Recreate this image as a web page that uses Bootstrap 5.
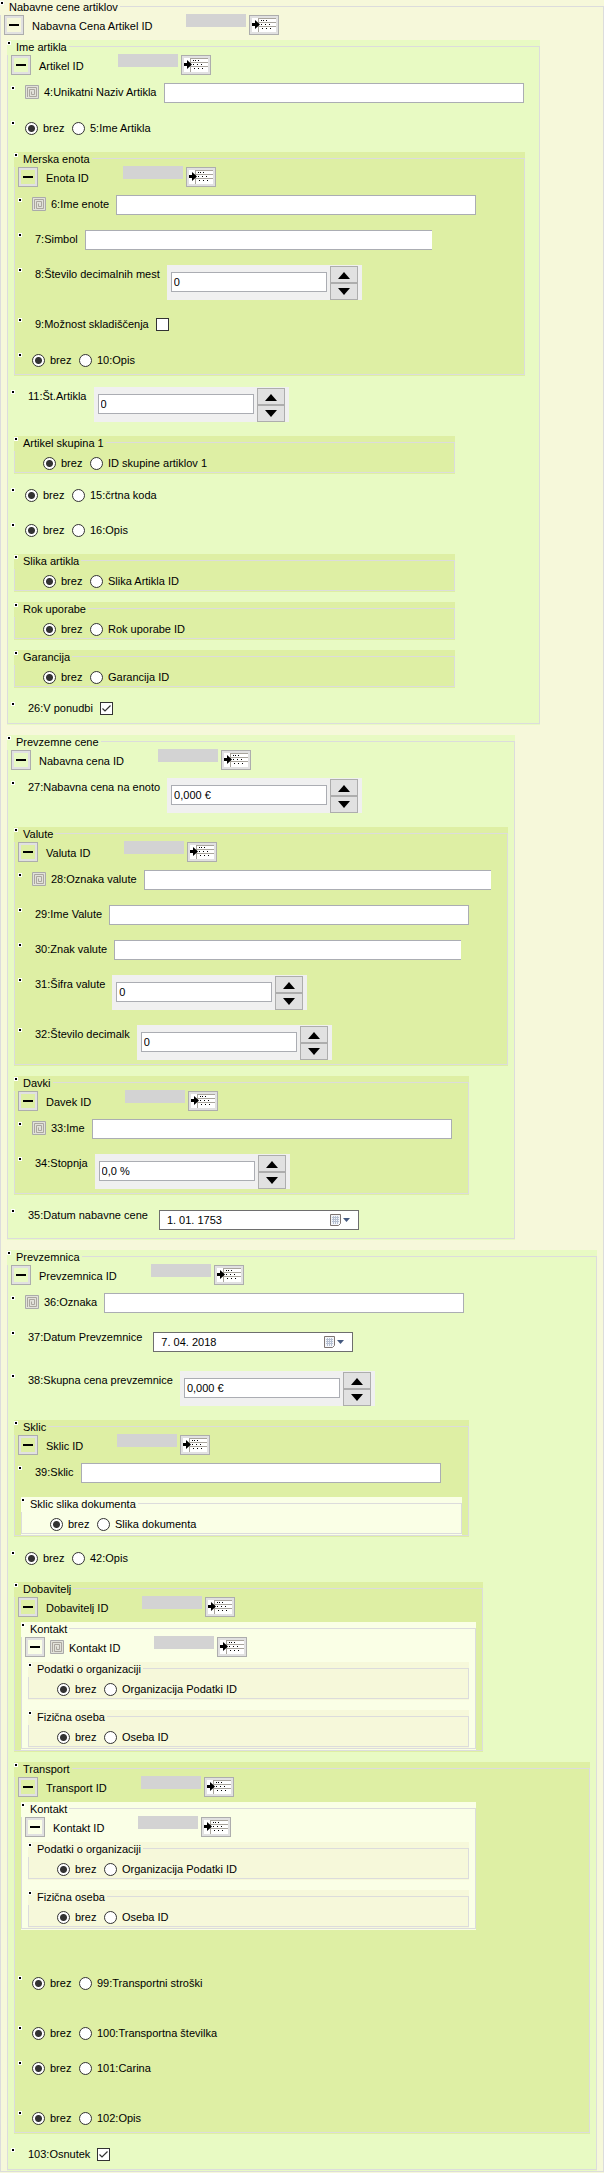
<!DOCTYPE html>
<html lang="sl">
<head>
<meta charset="utf-8">
<meta name="viewport" content="width=device-width, initial-scale=1">
<title>Nabavne cene artiklov</title>
<link href="https://cdn.jsdelivr.net/npm/bootstrap@5.3.0/dist/css/bootstrap.min.css" rel="stylesheet">
<style>
:root{--l0:#f6f8da;--l1:#e8fac3;--l2:#deefa4;--l3:#faffe6}
body{font:11px/16px "Liberation Sans",Arial,sans-serif;color:#000;background:var(--l0)}
.grp{position:relative;background:var(--bg);padding:0 7px 2px;margin-top:2px;max-width:100%}
.grp.ends-row{padding-bottom:0}
.grp::before{content:"";position:absolute;inset:6px 0 1px;border:1px solid #dcdcdc;pointer-events:none}
.grp>legend{position:relative;float:left;width:auto;font-size:11px;line-height:15px;height:15px;margin:0 0 0 -7px;padding:0 2px 0 9px;background:var(--bg)}
.grp>legend+*{clear:both}
.head+.grp{margin-top:0}
.grp+.grp{margin-top:10px}
.grp+.rowx{margin-top:8px}
.l0{--bg:var(--l0)}.l1{--bg:var(--l1)}.l2{--bg:var(--l2)}.l3{--bg:var(--l3)}
.grp>legend::before,.rowx::before{content:"";position:absolute;left:0;top:1px;width:4px;height:4px;background:#000;border:1px solid #fff}
.head{position:relative;height:25px;margin-left:-3px}
.head .sq{width:20px;height:20px;background:var(--bg);box-shadow:inset 0 0 0 2px #e1e1e1}
.head .lst{width:30px;height:20px}
.head .name{margin:3px 34px 0 8px}
.key+.name{margin-left:5px!important}
.head .bar{width:60px;height:13px;background:#d3d3d3;margin-right:3px;margin-top:-1px}
.key{width:14px;height:14px;flex:none}
.head .key{margin:3px 0 0 5px}
.btn3{border:1px solid #adadad;background:#e1e1e1;padding:0;display:flex;align-items:center;justify-content:center;border-radius:0;flex:none}
.rowx{position:relative;min-height:35px;padding:3px 0 0 11px;display:flex;align-items:flex-start}
.rowx::before{left:-3px;top:6px}
.rowx>label:first-of-type{margin:1px 7px 0 3px;white-space:nowrap}
.rowx>.key{margin-top:2px}
.rowx>.key+label:first-of-type{margin-left:5px}
.rowx.tall{min-height:50px}
.rowx.date{padding-top:7px;min-height:43px}
.rowx.date>label:first-of-type{margin-top:-3px;margin-right:11px}
.rowx.last{min-height:29px}
.rowx.tall.last{min-height:44px}
.rowx.date.last{min-height:37px}
.field{width:360px;height:20px;border:1px solid #abadb3;background:#fff;padding:0 3px;outline:0}
.field.cut{width:347px;border-right:0}
.spin{background:#f0f0f0;width:195px;height:35px;padding:1px 4px 0}
.spin input{width:156px;height:20px;margin-top:6px;border:1px solid #abadb3;background:#fff;padding:0 2px}
.spin .btn3{width:28px;height:17px}
.datebox{width:200px;height:20px;border:1px solid #6e6e6e;background:#fff;padding:0 5px 0 7px}
.datebox input{border:0;padding:0;width:100px;outline:0;background:none}
.opts{gap:5px;padding-top:4px}
.opts label{line-height:13px}
.opts label:first-of-type{width:20px}
.rd{appearance:none;width:13px;height:13px;margin:0;border:1px solid #333;border-radius:50%;background:#fff;flex:none}
.rd:checked{background:radial-gradient(circle,#333 3px,#fff 4px)}
.cb{appearance:none;width:13px;height:13px;margin:3px 0 0;border:1px solid #333;background:#fff;flex:none}
.cb:checked{background:#fff url("data:image/svg+xml,%3Csvg xmlns='http://www.w3.org/2000/svg' viewBox='0 0 11 11'%3E%3Cpath d='M1.5 5.5L4 8L9.500 2.500' fill='none' stroke='%23333' stroke-width='1.200'/%3E%3C/svg%3E")}
.inner{margin-left:22px;height:21px;padding-top:6px}
.leaf{width:441px}.w455{width:455px}.w469{width:469px}.w494{width:494px}.w508{width:508px}.w511{width:511px}.w533{width:533px}
.after-gap{margin-top:40px!important}
</style>
</head>
<body>
<svg class="d-none" aria-hidden="true">
<symbol id="i-list" viewBox="0 0 24 14"><path fill="#fff" d="M0 0h24v14H0z"/><path stroke="#a8a49c" d="M6 .5h18M6 4.500h18M6 8.500h18M6.500 0v14" fill="none"/><path d="M0 5h3V2l5 4.500-5 4.500V8H0z"/><path d="M9 2h1v1H9zM11 2h1v1h-1zM14 2h1v1h-1zM9 6h1v1H9zM13 6h1v1h-1zM17 6h1v1h-1zM10 10h1v1h-1zM14 10h1v1h-1zM18 10h1v1h-1z"/></symbol>
<symbol id="i-key" viewBox="0 0 14 14"><path fill="#e2e2da" stroke="#aaa" d="M.5.5h13v13H.5z"/><path fill="none" stroke="#aaa69f" d="M2.500 12V2.500h9v9h-7v-7h5v5h-3v-3"/></symbol>
<symbol id="i-cal" viewBox="0 0 24 14"><path d="M1.500 1.500h10v9l-2 2h-8z" fill="#f4f6fa" stroke="#7d7472"/><path d="M3 4.500h7M3 6.500h7M3 8.500h7M4.500 3v8M6.500 3v8M8.500 3v8" stroke="#b6c0d2" fill="none"/><path d="M14 5h7l-3.500 4z" fill="#44597f"/></symbol>
</svg>
<main id="app"></main>
<script>
let n = 0;
const use = (id, w, h, c = '') => `<svg class="${c}" width="${w}" height="${h}" aria-hidden="true"><use href="#${id}"/></svg>`;
const key = use('i-key', 14, 14, 'key');
const group = (lvl, cls, title, body) => `<fieldset class="grp l${lvl} ${cls}"><legend>${title}</legend>${body}</fieldset>`;
const head = (name, k) => `<div class="head d-flex align-items-start"><button type="button" class="btn3 sq" aria-label="Skrij"><svg width="10" height="2"><path d="M0 0h10v2H0z"/></svg></button>${k ? key : ''}<span class="name text-nowrap">${name}</span><span class="bar"></span><button type="button" class="btn3 lst" aria-label="Izberi">${use('i-list', 24, 14)}</button></div>`;
const text = (label, k, cls = '', f = '') => { n++; return `<div class="rowx ${cls}">${k ? key : ''}<label for="f${n}">${label}</label><input type="text" class="field ${f}" id="f${n}"></div>`; };
const spin = (label, val, cls = '') => { n++; return `<div class="rowx tall ${cls}"><label for="f${n}">${label}</label><div class="spin d-flex justify-content-between"><input type="text" id="f${n}" value="${val}"><div><button type="button" class="btn3" aria-label="Več"><svg width="12" height="8"><path d="M0 8h12L6 1z"/></svg></button><button type="button" class="btn3" aria-label="Manj"><svg width="12" height="8"><path d="M0 0h12L6 7z"/></svg></button></div></div></div>`; };
const radios = name => { n++; return `<input class="rd" type="radio" name="r${n}" id="a${n}" checked><label for="a${n}">brez</label><input class="rd ms-1" type="radio" name="r${n}" id="b${n}"><label class="text-nowrap" for="b${n}">${name}</label>`; };
const opt = (name, cls = '') => `<div class="rowx ${cls}"><div class="opts d-flex">${radios(name)}</div></div>`;
const check = (label, on, cls = '') => { n++; return `<div class="rowx ${cls}"><label for="f${n}">${label}</label><input class="cb" type="checkbox" id="f${n}" ${on ? 'checked' : ''}></div>`; };
const date = (label, val, cls = '') => { n++; return `<div class="rowx date ${cls}"><label for="f${n}">${label}</label><div class="datebox d-flex justify-content-between align-items-center"><input type="text" id="f${n}" value="${val}">${use('i-cal', 24, 14)}</div></div>`; };
const leaf = (lvl, title, name) => group(lvl, 'leaf', title, `<div class="opts inner d-flex">${radios(name)}</div>`);
const contact = k => group(3, 'w455', 'Kontakt', head('Kontakt ID', k) + leaf(0, 'Podatki o organizaciji', 'Organizacija Podatki ID') + leaf(0, 'Fizična oseba', 'Oseba ID'));

document.getElementById('app').innerHTML = group(0, 'root mt-0', 'Nabavne cene artiklov', head('Nabavna Cena Artikel ID') +
  group(1, 'ends-row w533', 'Ime artikla', head('Artikel ID') + text('4:Unikatni Naziv Artikla', 1) + opt('5:Ime Artikla') +
    group(2, 'ends-row w511', 'Merska enota', head('Enota ID') + text('6:Ime enote', 1) + text('7:Simbol', 0, '', 'cut') + spin('8:Število decimalnih mest', '0') + check('9:Možnost skladiščenja') + opt('10:Opis', 'last')) +
    spin('11:Št.Artikla', '0') + leaf(2, 'Artikel skupina 1', 'ID skupine artiklov 1') + opt('15:črtna koda') + opt('16:Opis') +
    leaf(2, 'Slika artikla', 'Slika Artikla ID') + leaf(2, 'Rok uporabe', 'Rok uporabe ID') + leaf(2, 'Garancija', 'Garancija ID') + check('26:V ponudbi', 1, 'last')) +
  group(1, 'ends-row w508', 'Prevzemne cene', head('Nabavna cena ID') + spin('27:Nabavna cena na enoto', '0,000 €') +
    group(2, 'ends-row w494', 'Valute', head('Valuta ID') + text('28:Oznaka valute', 1, '', 'cut') + text('29:Ime Valute') + text('30:Znak valute', 0, '', 'cut') + spin('31:Šifra valute', '0') + spin('32:Število decimalk', '0', 'last')) +
    group(2, 'ends-row w455', 'Davki', head('Davek ID') + text('33:Ime', 1) + spin('34:Stopnja', '0,0 %', 'last')) + date('35:Datum nabavne cene', '1. 01. 1753', 'last')) +
  group(1, 'ends-row', 'Prevzemnica', head('Prevzemnica ID') + text('36:Oznaka', 1) + date('37:Datum Prevzemnice', '7. 04. 2018') + spin('38:Skupna cena prevzemnice', '0,000 €') +
    group(2, 'w455', 'Sklic', head('Sklic ID') + text('39:Sklic') + leaf(3, 'Sklic slika dokumenta', 'Slika dokumenta')) + opt('42:Opis') +
    group(2, 'w469', 'Dobavitelj', head('Dobavitelj ID') + contact(1)) +
    group(2, 'ends-row', 'Transport', head('Transport ID') + contact(0) + opt('99:Transportni stroški', 'tall after-gap') + opt('100:Transportna številka') + opt('101:Carina', 'tall') + opt('102:Opis', 'last')) +
    check('103:Osnutek', 1, 'last')));
</script>
<script src="https://cdn.jsdelivr.net/npm/bootstrap@5.3.0/dist/js/bootstrap.bundle.min.js"></script>
</body>
</html>
